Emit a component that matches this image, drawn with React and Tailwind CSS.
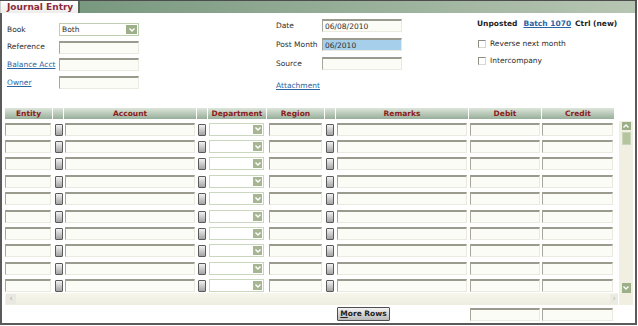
const COLS = "grid grid-cols-[47px_10px_132px_10px_58px_57px_10px_132px_72px_72px] gap-x-px";
const HEADERS = ["Entity", "", "Account", "", "Department", "Region", "", "Remarks", "Debit", "Credit"];
const BOX =
  "block h-[13px] border-t-2 border-l border-r border-b border-t-[#9a9a8e] border-l-[#a6a69a] border-r-[#ebeae0] border-b-[#ebeae0] outline-none";
const INPUT = `${BOX} bg-[#fcfcf7]`;
const LOOKUP =
  "block w-[8px] h-[12px] mt-px rounded-[1px] border border-[#5a5a5a] bg-linear-to-b from-[#f2f2f2] to-[#a4a4a4]";
const ROWS = Array.from({ length: 10 }, (_, i) => i);

function Chevron({ up = false }) {
  return (
    <svg width="6" height="4" viewBox="0 0 6 4" className="block">
      <path d={up ? "M0.5 3.5 L3 1 L5.5 3.5" : "M0.5 0.5 L3 3 L5.5 0.5"} stroke="#ffffff" strokeWidth="1.4" fill="none" />
    </svg>
  );
}

function Field({ label, link, children, w = "w-[52px]" }) {
  return (
    <div className="flex items-center h-[13px]">
      <span className={`${w} ${link ? "text-[#2a64a4] underline" : ""}`}>{label}</span>
      {children}
    </div>
  );
}

function Checkbox({ label }) {
  return (
    <div className="flex items-center h-[10px] gap-[4px] ml-px">
      <span className="block w-[8px] h-[8px] bg-white border-t border-l border-[#8d8d85] border-r border-b border-r-[#d8d8d0] border-b-[#d8d8d0]" />
      <span>{label}</span>
    </div>
  );
}

export default function App() {
  return (
    <div className="w-[637px] h-[326px] bg-white text-[7.5px] leading-[10px] text-[#2e2e2e] font-['DejaVu_Sans',sans-serif]">
      {/* tab bar */}
      <div className="flex h-[13px] border-t border-[#4d4d4d]">
        <div className="w-[78px] pl-[6px] bg-linear-to-b from-white to-[#ededea] border-l border-[#cfcfcf] text-[9px] leading-[12px] font-bold text-[#8b2b3b]">
          Journal Entry
        </div>
        <div className="flex-1 bg-linear-to-r from-[#799880] to-[#b7c6b2] border-l-2 border-l-[#56675a] border-r-2 border-r-[#555555]" />
      </div>

      {/* panel */}
      <div className="h-[312px] border-l-2 border-r-2 border-b-2 border-[#5a5a5a]">
        {/* header form */}
        <div className="flex h-[95px] pl-[5px]">
          <div className="w-[269px] pt-[10px] flex flex-col gap-[4.7px]">
            <Field label="Book">
              <div className="w-[80px] h-[13px] flex items-center justify-between border border-[#bfcdb0] bg-white pl-[2px] pr-px">
                <span>Both</span>
                <span className="w-[11px] h-[9px] bg-[#9db08a] flex items-center justify-center">
                  <Chevron />
                </span>
              </div>
            </Field>
            <Field label="Reference">
              <input className={`${INPUT} w-[80px]`} />
            </Field>
            <Field label="Balance Acct" link>
              <input className={`${INPUT} w-[80px]`} />
            </Field>
            <Field label="Owner" link>
              <input className={`${INPUT} w-[80px]`} />
            </Field>
          </div>

          <div className="w-[201px] pt-[6px] flex flex-col">
            <div className="flex flex-col gap-[6px]">
              <Field label="Date" w="w-[46px]">
                <input className={`${INPUT} w-[80px] h-[12px] pl-[2px] text-[7.5px]`} defaultValue="06/08/2010" readOnly />
              </Field>
              <Field label="Post Month" w="w-[46px]">
                <input className={`${BOX} bg-[#a5cfea] w-[80px] h-[12px] pl-[2px] text-[7.5px]`} defaultValue="06/2010" readOnly />
              </Field>
              <Field label="Source" w="w-[46px]">
                <input className={`${INPUT} w-[80px] h-[12px]`} />
              </Field>
            </div>
            <span className="mt-[11px] text-[#2a64a4] underline">Attachment</span>
          </div>

          <div className="flex-1 pt-[6px] flex flex-col">
            <div className="flex font-bold text-[#1e1e1e]">
              <span>Unposted</span>
              <span className="ml-[6px] text-[#2a64a4] underline">Batch 1070</span>
              <span className="ml-[4px]">Ctrl (new)</span>
            </div>
            <div className="mt-[9.5px] flex flex-col gap-[7.5px]">
              <Checkbox label="Reverse next month" />
              <Checkbox label="Intercompany" />
            </div>
          </div>
        </div>

        {/* grid */}
        <div className="flex h-[197px] pl-[3px]">
          <div className="w-[613px] flex flex-col">
            <div className={`${COLS} h-[11px]`}>
              {HEADERS.map((h, i) => (
                <div
                  key={i}
                  className="bg-linear-to-b from-[#dde6da] to-[#98ae9a] text-center font-bold text-[#8c1b1b] leading-[11px]"
                >
                  {h}
                </div>
              ))}
            </div>

            <div className="h-[174px] pt-[3.7px] overflow-hidden">
              {ROWS.map((r) => (
                <div key={r} className={`${COLS} h-[17.4px]`}>
                  <input className={`${INPUT} w-[46px]`} />
                  <span className={`${LOOKUP} ml-[2px]`} />
                  <input className={`${INPUT} ml-px w-[130px]`} />
                  <span className={`${LOOKUP} ml-px`} />
                  <div className="ml-px w-[55px] h-[13px] flex items-center justify-end border border-[#cad6bd] bg-white pr-px">
                    <span className="w-[9px] h-[9px] bg-[#a6b692] flex items-center justify-center">
                      <Chevron />
                    </span>
                  </div>
                  <input className={`${INPUT} ml-[2px] w-[53px]`} />
                  <span className={`${LOOKUP} ml-px`} />
                  <input className={`${INPUT} ml-px w-[130px]`} />
                  <input className={`${INPUT} ml-px w-[70px]`} />
                  <input className={`${INPUT} w-[71px]`} />
                </div>
              ))}
            </div>

            {/* horizontal scrollbar */}
            <div className="h-[12px] flex items-center justify-between bg-linear-to-b from-[#f7f6ec] to-[#eeede0]">
              <span className="w-[10px] h-[10px] ml-px bg-[#e9e9e2] text-[#a8a8a0] text-[8px] leading-[10px] text-center">‹</span>
              <span className="w-[8px] h-[10px] bg-[#ecebe2] text-[#b8b8b0] text-[8px] leading-[10px] text-center">›</span>
            </div>
          </div>

          {/* vertical scrollbar */}
          <div className="w-[14px] ml-px mt-[13px] bg-[#f0efe2] flex flex-col px-[2.5px] pt-px">
            <span className="h-[8px] bg-[#9bb088] flex items-center justify-center">
              <Chevron up />
            </span>
            <span className="mt-[2px] h-[13px] bg-[#b4c49f] border border-[#c9d5ba]" />
            <span className="flex-1" />
            <span className="h-[10px] bg-[#9bb088] flex items-center justify-center">
              <Chevron />
            </span>
            <span className="h-[12px]" />
          </div>
        </div>

        {/* footer */}
        <div className={`${COLS} pl-[3px] pt-[2px] w-[616px]`}>
          <span className="col-start-8 ml-px w-[53px] h-[14px] flex items-center justify-center rounded-[1px] border border-[#4f4f4f] bg-linear-to-b from-[#f3f3f3] to-[#b9b9b9] font-bold text-[#222]">
            <span>
              <span className="underline">M</span>ore Rows
            </span>
          </span>
          <input className={`${INPUT} mt-px ml-px w-[70px]`} />
          <input className={`${INPUT} mt-px w-[71px]`} />
        </div>
      </div>
    </div>
  );
}
